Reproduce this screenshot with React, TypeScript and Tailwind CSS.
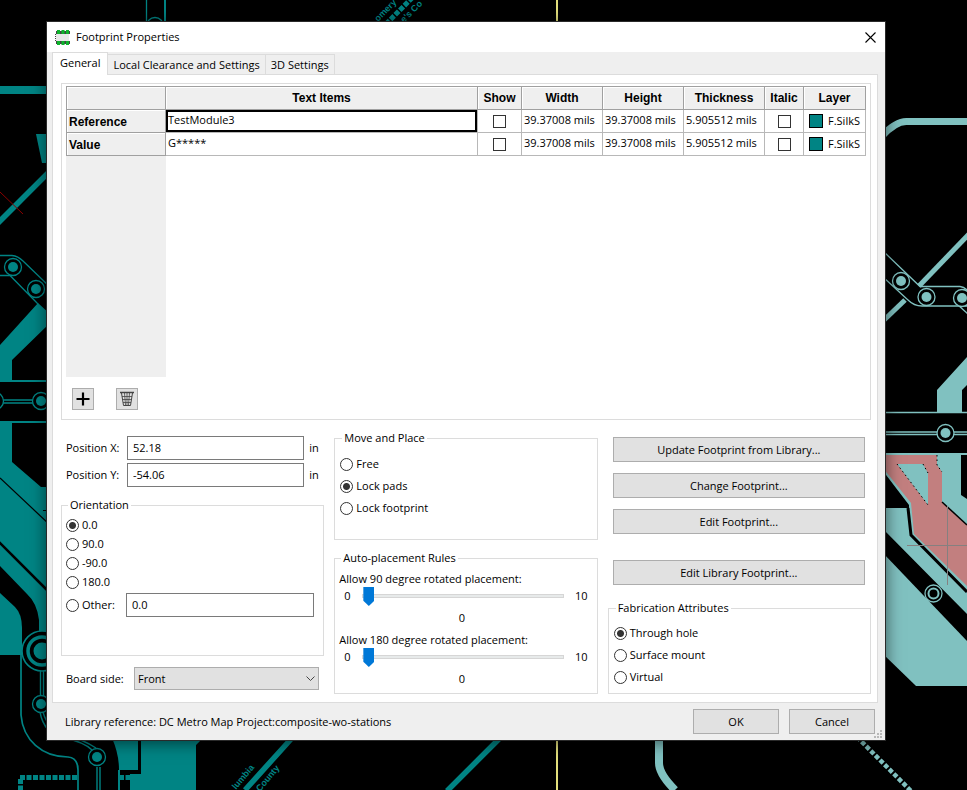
import type { ReactNode } from "react";

const TEAL = "#008484";
const PALE = "#80c1c0";

function Station({ x, y, color }: { x: number; y: number; color: string }) {
  return (
    <g>
      <circle cx={x} cy={y} r="8.5" fill="#000" stroke={color} strokeWidth="1.3" />
      <circle cx={x} cy={y} r="5" fill={color} />
    </g>
  );
}

function BoardCanvas() {
  return (
    <svg
      className="absolute inset-0 h-full w-full"
      viewBox="0 0 967 790"
      preserveAspectRatio="xMidYMid slice"
      aria-hidden="true"
    >
      <rect width="967" height="790" fill="#000" />

      <g fill="none" stroke={TEAL} strokeWidth="1.3">
        <path d="M146.5 0V24" />
        <path d="M165 0V24" strokeWidth="2" />
        <circle cx="155" cy="26" r="8.5" />
        <path d="M0 90H50" strokeWidth="8" />
        <path d="M-3 224L50 171" strokeWidth="5.5" />
        <path d="M0 255.500H12Q18 256 23 261L50 287" />
        <path d="M0 275.500H10L38 304" />
        <path d="M0 400H41M0 403H41" />
      </g>
      <path d="M36 134H50V163H42Z" fill={TEAL} />
      <path d="M0 192L23 214" stroke="#8a0000" strokeWidth="1" />
      <path d="M0 345L38 303L50 314V323L12 360V380H50V382H0Z" fill={TEAL} />
      <Station x={13} y={267} color={TEAL} />
      <Station x={36} y={289} color={TEAL} />
      <Station x={-5} y={401} color={TEAL} />
      <Station x={41} y={401} color={TEAL} />

      <path
        d="M0 421H50V423H12V462L41 487H50V632H39V620Q37 603 27 594L0 566Z"
        fill={TEAL}
      />
      <path d="M0 593L15 607Q22 614 22 628V655H0Z" fill={TEAL} />
      <path d="M0 478L50 525" stroke="#000" strokeWidth="1.200" />
      <path d="M-2 541L50 593" stroke="#000" strokeWidth="2.500" />
      <path d="M43 510.500H50" stroke="#000" />
      <g fill="none" stroke={TEAL} strokeWidth="1.4">
        <path d="M40.500 671V696M43.500 671V696" />
        <path d="M21 650V715C23 740 42 757 68 757Q78 758 78 770V790" strokeWidth="1.700" />
        <path d="M40 712Q44 734 64 738T92 750M43 712Q48 730 66 735T96 748" />
        <path d="M97 767V790M100 767V790" />
        <path d="M119 770V790" strokeWidth="2" />
        <path d="M20 777.500H78M119 777.500H131" strokeWidth="5" strokeDasharray="5 1.500" />
        <path d="M20.500 779V790" strokeWidth="5" strokeDasharray="5 1.500" />
        <path d="M292 738L245 790M502 736L447 791" strokeWidth="5.500" />
      </g>
      <circle cx="42" cy="651" r="20" fill="#000" stroke={TEAL} strokeWidth="1.600" />
      <circle cx="42" cy="651" r="14" fill="none" stroke={TEAL} strokeWidth="3.500" />
      <circle cx="42" cy="651" r="8.500" fill={TEAL} />
      <Station x={41} y={704} color={TEAL} />
      <Station x={97} y={757} color={TEAL} />
      <path d="M112 738Q119 754 119 770H138V738Z" fill={TEAL} />
      <path d="M141 738H203L196 745V790H130V774H141Z" fill={TEAL} />

      <g fill={TEAL} fontFamily="Liberation Sans, sans-serif" fontSize="9" fontWeight="bold">
        <text transform="translate(378 22) rotate(-45)">omery Co</text>
        <text transform="translate(404 23) rotate(-45)">e's Co</text>
        <text transform="translate(236 790) rotate(-50)">lumbia</text>
        <text transform="translate(260 792) rotate(-50)">County</text>
      </g>
      <path d="M386 24L412 -2" stroke={TEAL} strokeWidth="5" strokeDasharray="5 1.500" />

      <path d="M557 0V790" stroke="#e2df7c" strokeWidth="2" />

      <g fill="none" stroke={PALE} strokeWidth="1.300">
        <path d="M967 121.500H907Q896 121 882 136" strokeWidth="7" />
        <path d="M970 233L919 286" strokeWidth="5" />
        <path d="M882 322L905 300" strokeWidth="5" />
        <path d="M883 251L920 286.500H960Q964 287 967 290" />
        <path d="M883 277L908 300Q914 306 922 306H967M958 305L969 315" />
        <path d="M883 412.500H967" />
        <path d="M883 432H967M883 434.500H967" />
        <path d="M659 738V763Q659 774 675 790" strokeWidth="8" />
        <path d="M857 737L912 792" strokeWidth="4.500" strokeDasharray="4.500 2" />
      </g>
      <Station x={901} y={281} color={PALE} />
      <Station x={926.5} y={297} color={PALE} />
      <Station x={962} y={298} color={PALE} />
      <Station x={945.5} y={433} color={PALE} />
      <path d="M967 357L937 390V412H962V390L967 385Z" fill={PALE} />

      <path d="M883 453H967V614L883 529V508H909V505L883 471Z" fill={PALE} />
      <path d="M961 455V495L967 499V455Z" fill="#000" />
      <path d="M883 455H937V465L942 472V502L967 525V586L914 534L911 503L883 468Z" fill="#c27f7f" />
      <path d="M897 464H923L928 473V505Z" fill={PALE} />
      <path d="M897 464L928 505M923 464L928 473M937 455V465L942 472" fill="none" stroke="#000" strokeDasharray="1.500 3" />
      <path d="M942 502L967 525" stroke="#000" strokeWidth="1.500" />
      <path d="M908 508L911 535L967 592" fill="none" stroke="#000" strokeWidth="3" />
      <path d="M883 553L967 641V686H916L883 654Z" fill={PALE} />
      <circle cx="933.500" cy="593.500" r="8.500" fill="#000" stroke={PALE} strokeWidth="1.300" />
      <circle cx="933.500" cy="593.500" r="5" fill="#000" stroke={PALE} strokeWidth="2" />
      <path d="M907 545.500H967M947.500 506V585" stroke="#858080" strokeWidth="1" />
    </svg>
  );
}

function FootprintIcon() {
  return (
    <svg className="h-[15px] w-[15px]" viewBox="0 0 15 15" aria-hidden="true">
      <rect x="1" y="4" width="13" height="7" fill="#e8e8e8" />
      <path d="M.5 4V11" stroke="#444" strokeDasharray="1 1" />
      <path d="M1 2.500H15M1 12.500H15" stroke="#444" strokeWidth="3" />
      <path d="M2 2h3M6.500 2h3M11 2h3M2 13h3M6.500 13h3M11 13h3" stroke="#0db32b" strokeWidth="4" />
    </svg>
  );
}

function TrashIcon() {
  return (
    <svg className="h-4 w-4" viewBox="0 0 16 16" fill="none" stroke="#444" aria-hidden="true">
      <path d="M1 1.500H15" strokeWidth="1.500" />
      <path d="M2.500 2L4.500 14.500H11.500L13.500 2" strokeWidth="1" />
      <path d="M3 5.500H13M3.500 8.500H12.500M4 11.500H12M5.500 2L6.500 14M8 2V14M10.500 2L9.500 14" strokeWidth=".8" />
    </svg>
  );
}

function Radio({ name, label, checked }: { name: string; label: string; checked?: boolean }) {
  return (
    <label className="flex items-center gap-[3px]">
      <input
        type="radio"
        name={name}
        defaultChecked={checked}
        className="h-[13px] w-[13px] shrink-0 appearance-none rounded-full border border-[#333] bg-white checked:bg-[radial-gradient(circle,#333_3px,#fff_4px)]"
      />
      {label}
    </label>
  );
}

function Group({ title, className, children }: { title: string; className: string; children: ReactNode }) {
  return (
    <fieldset className={`min-w-0 border border-[#dcdcdc] ${className}`}>
      <legend className="ml-[2px] px-[2px] leading-4">{title}</legend>
      {children}
    </fieldset>
  );
}

function PushButton({ children, className }: { children: ReactNode; className: string }) {
  return (
    <button type="button" className={`h-[25px] border border-[#adadad] bg-[#e1e1e1] ${className}`}>
      {children}
    </button>
  );
}

function Rule({ id, label }: { id: string; label: string }) {
  return (
    <div>
      <label htmlFor={id} className="block leading-4">{label}</label>
      <div className="flex h-[18px] items-center px-[5px]">
        <span className="w-[18px]">0</span>
        <input
          id={id}
          type="range"
          min={0}
          max={10}
          defaultValue={0}
          className="h-[18px] min-w-0 flex-1 appearance-none bg-transparent [&::-webkit-slider-runnable-track]:h-1 [&::-webkit-slider-runnable-track]:border [&::-webkit-slider-runnable-track]:border-[#d6d6d6] [&::-webkit-slider-runnable-track]:bg-[#e7eaea] [&::-webkit-slider-thumb]:-mt-2 [&::-webkit-slider-thumb]:h-[19px] [&::-webkit-slider-thumb]:w-[11px] [&::-webkit-slider-thumb]:appearance-none [&::-webkit-slider-thumb]:bg-[#0078d7] [&::-webkit-slider-thumb]:[clip-path:polygon(0_0,100%_0,100%_72%,50%_100%,0_72%)]"
        />
        <span className="w-6 text-right">10</span>
      </div>
      <output htmlFor={id} className="block pr-2 text-center leading-[26px]">0</output>
    </div>
  );
}

const rows = [
  { kind: "Reference", text: "TestModule3", active: true },
  { kind: "Value", text: "G*****", active: false },
];

const head = "border border-[#a0a0a0] bg-[#efefef] p-0 font-['Liberation_Sans',sans-serif] text-[12px] font-bold shadow-[inset_1px_1px_0_#fff]";
const cell = "border border-[#b8b8b8] p-0 pl-[2px] align-top leading-[19px] whitespace-nowrap";
const tick = "block h-[13px] w-[13px] appearance-none border border-[#333] bg-white checked:bg-[#333]";

function TextItems() {
  return (
    <table className="w-full table-fixed border-collapse bg-white">
      <colgroup>
        <col className="w-[99px]" />
        <col />
        <col className="w-[44px]" />
        <col className="w-[81px]" />
        <col className="w-[81px]" />
        <col className="w-[81px]" />
        <col className="w-[39px]" />
        <col className="w-[62px]" />
      </colgroup>
      <thead>
        <tr className="h-[23px]">
          <td className={head} />
          {["Text Items", "Show", "Width", "Height", "Thickness", "Italic", "Layer"].map((h) => (
            <th key={h} scope="col" className={head}>{h}</th>
          ))}
        </tr>
      </thead>
      <tbody>
        {rows.map((r) => (
          <tr key={r.kind} className="h-[23px]">
            <th scope="row" className={`${head} pt-px pl-[2px] text-left`}>{r.kind}</th>
            <td className={r.active ? `${cell} shadow-[inset_0_0_0_2px_#000]` : cell}>{r.text}</td>
            <td className="border border-[#b8b8b8] p-0 pl-[15px]">
              <input type="checkbox" aria-label={`Show ${r.kind}`} className={tick} />
            </td>
            <td className={cell}>39.37008 mils</td>
            <td className={cell}>39.37008 mils</td>
            <td className={cell}>5.905512 mils</td>
            <td className="border border-[#b8b8b8] p-0 pl-[13px]">
              <input type="checkbox" aria-label={`Italic ${r.kind}`} className={tick} />
            </td>
            <td className="border border-[#b8b8b8] p-0 pl-[5px]">
              <div className="flex items-center gap-[5px] leading-4">
                <span className="h-[14px] w-[14px] shrink-0 border border-black bg-[#008484]" />
                F.SilkS
              </div>
            </td>
          </tr>
        ))}
      </tbody>
    </table>
  );
}

const field = "h-6 min-w-0 flex-1 border border-[#7a7a7a] bg-white px-[5px] pb-[2px]";

export default function App() {
  return (
    <main className="relative min-h-screen overflow-hidden bg-black pt-[22px] pr-[82px] pb-[50px] pl-[47px] font-['Open_Sans','Noto_Sans',sans-serif] text-[11px] leading-4 text-black">
      <BoardCanvas />
      <section
        role="dialog"
        aria-labelledby="dialog-title"
        className="relative bg-[#efefef] shadow-[0_0_0_1px_#2a2a2a,0_2px_14px_2px_rgba(0,0,0,0.5)]"
      >
        <header className="flex h-[30px] items-center bg-white pr-[8px] pl-2">
          <FootprintIcon />
          <h1 id="dialog-title" className="ml-[6px] flex-1">Footprint Properties</h1>
          <button type="button" aria-label="Close" className="p-px">
            <svg className="h-[11px] w-[11px]" viewBox="0 0 11 11" stroke="#000" strokeWidth="1.100" aria-hidden="true">
              <path d="M.5 .5L10.500 10.500M10.500 .5L.5 10.500" />
            </svg>
          </button>
        </header>

        <div role="tablist" className="flex h-[22px] items-end pl-[5px]">
          <button type="button" role="tab" aria-selected="true" className="relative z-10 -mb-px h-[23px] border border-b-0 border-[#dcdcdc] bg-white px-[7px] pb-[2px]">
            General
          </button>
          <button type="button" role="tab" aria-selected="false" className="h-[20px] border border-b-0 border-l-0 border-[#dcdcdc] px-[5px] pt-px">
            Local Clearance and Settings
          </button>
          <button type="button" role="tab" aria-selected="false" className="h-[20px] border border-b-0 border-l-0 border-[#dcdcdc] px-[5px] pt-px">
            3D Settings
          </button>
        </div>

        <div role="tabpanel" className="mr-[7px] ml-[5px] border border-[#dcdcdc] bg-white pt-2 pr-[6px] pb-2 pl-2">
          <div className="border border-[#dcdcdc] pt-[2px] pr-1 pb-[9px] pl-1">
            <div className="bg-[linear-gradient(90deg,#efefef_100px,#fff_100px)] pb-[221px]">
              <TextItems />
            </div>
            <div className="mt-[11px] ml-[6px] flex gap-[22px]">
              <button type="button" aria-label="Add text item" className="flex h-[22px] w-[22px] items-center justify-center border border-[#adadad] bg-[#e1e1e1]">
                <svg className="h-[14px] w-[14px]" viewBox="0 0 14 14" stroke="#000" strokeWidth="2.200" aria-hidden="true">
                  <path d="M7 .5V13.500M.5 7H13.500" />
                </svg>
              </button>
              <button type="button" aria-label="Delete text item" className="flex h-[22px] w-[22px] items-center justify-center border border-[#adadad] bg-[#e1e1e1]">
                <TrashIcon />
              </button>
            </div>
          </div>

          <div className="mt-[10px] grid grid-cols-3 gap-[10px]">
            <div className="flex flex-col pt-[6px]">
              <div className="flex flex-col gap-[3px] pl-[5px]">
                <div className="flex items-center">
                  <label htmlFor="pos-x" className="w-[61px]">Position X:</label>
                  <input id="pos-x" defaultValue="52.18" className={field} />
                  <span className="w-5 pl-[5px]">in</span>
                </div>
                <div className="flex items-center">
                  <label htmlFor="pos-y" className="w-[61px]">Position Y:</label>
                  <input id="pos-y" defaultValue="-54.06" className={field} />
                  <span className="w-5 pl-[5px]">in</span>
                </div>
              </div>

              <Group title="Orientation" className="mt-[10px] flex-1 pr-[9px] pl-[4px]">
                <div className="mt-1 flex flex-col gap-[3px]">
                  <Radio name="orientation" label="0.0" checked />
                  <Radio name="orientation" label="90.0" />
                  <Radio name="orientation" label="-90.0" />
                  <Radio name="orientation" label="180.0" />
                  <div className="flex items-center">
                    <div className="w-[60px]">
                      <Radio name="orientation" label="Other:" />
                    </div>
                    <input aria-label="Other orientation" defaultValue="0.0" className={field} />
                  </div>
                </div>
              </Group>

              <div className="mt-[11px] mb-[4px] flex items-center pr-[5px] pl-[5px]">
                <label htmlFor="side" className="w-[68px]">Board side:</label>
                <div className="relative flex-1">
                  <select id="side" className="block h-[23px] w-full appearance-none border border-[#adadad] bg-[#e1e1e1] pl-[3px]">
                    <option>Front</option>
                    <option>Back</option>
                  </select>
                  <svg className="pointer-events-none absolute top-[9px] right-[4px] h-[6px] w-[9px]" viewBox="0 0 9 6" fill="none" stroke="#444" aria-hidden="true">
                    <path d="M.5 .5L4.500 4.500L8.500 .5" />
                  </svg>
                </div>
              </div>
            </div>

            <div className="flex flex-col">
              <Group title="Move and Place" className="h-[110px] pl-[5px]">
                <div className="mt-[10px] flex flex-col gap-[6px]">
                  <Radio name="move" label="Free" />
                  <Radio name="move" label="Lock pads" checked />
                  <Radio name="move" label="Lock footprint" />
                </div>
              </Group>
              <Group title="Auto-placement Rules" className="mt-[10px] flex-1 pr-[4px] pb-px pl-[4px]">
                <div className="mt-[5px] flex flex-col gap-px">
                  <Rule id="rule-90" label="Allow 90 degree rotated placement:" />
                  <Rule id="rule-180" label="Allow 180 degree rotated placement:" />
                </div>
              </Group>
            </div>

            <div className="flex flex-col">
              <div className="flex flex-col gap-[11px] pt-[7px] pr-[6px] pl-[5px]">
                <PushButton className="w-full">Update Footprint from Library...</PushButton>
                <PushButton className="w-full">Change Footprint...</PushButton>
                <PushButton className="w-full">Edit Footprint...</PushButton>
                <PushButton className="mt-[15px] w-full">Edit Library Footprint...</PushButton>
              </div>
              <Group title="Fabrication Attributes" className="mt-[15px] flex-1 pl-[5px]">
                <div className="mt-[9px] flex flex-col gap-[6px]">
                  <Radio name="fab" label="Through hole" checked />
                  <Radio name="fab" label="Surface mount" />
                  <Radio name="fab" label="Virtual" />
                </div>
              </Group>
            </div>
          </div>
        </div>

        <footer className="relative flex h-[37px] items-center gap-[10px] pr-[10px] pl-[18px]">
          <p className="flex-1">Library reference: DC Metro Map Project:composite-wo-stations</p>
          <PushButton className="w-[86px]">OK</PushButton>
          <PushButton className="w-[86px]">Cancel</PushButton>
          <svg className="absolute right-[3px] bottom-[2px] h-2 w-2" viewBox="0 0 8 8" fill="#b8b8b8" aria-hidden="true">
            <path d="M6 0h2v2H6zM6 3h2v2H6zM3 3h2v2H3zM6 6h2v2H6zM3 6h2v2H3zM0 6h2v2H0z" />
          </svg>
        </footer>
      </section>
    </main>
  );
}
